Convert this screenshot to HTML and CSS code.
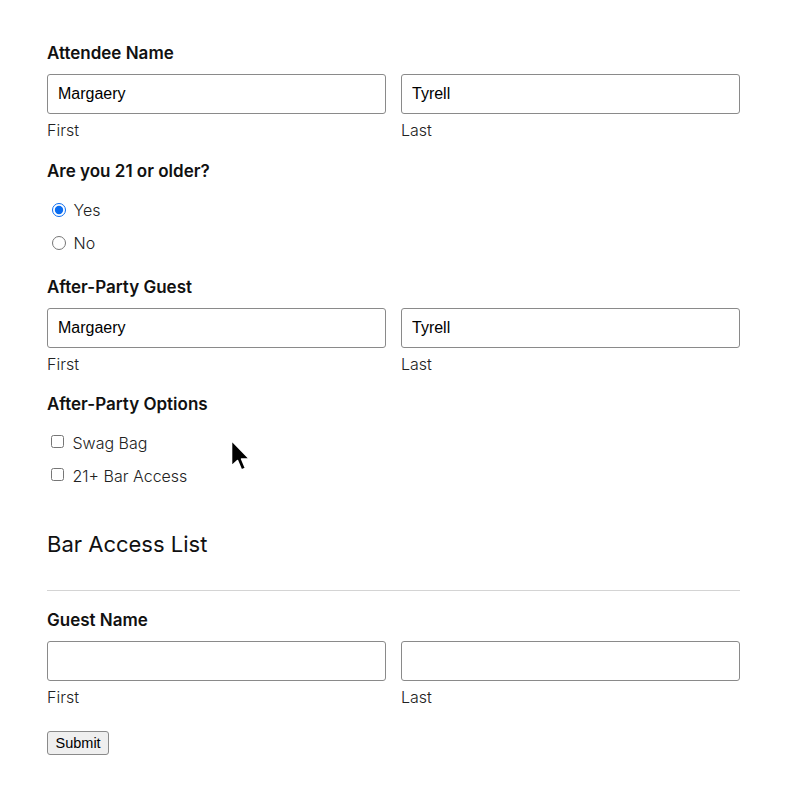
FILE: index.html
```html
<!DOCTYPE html>
<html>
<head>
<meta charset="utf-8">
<link rel="stylesheet" href="styles.css">
</head>
<body>
<form class="form">
  <div class="group">
    <div class="label">Attendee Name</div>
    <div class="name-row">
      <div class="col"><input class="text" type="text" value="Margaery"><span class="sub">First</span></div>
      <div class="col"><input class="text" type="text" value="Tyrell"><span class="sub">Last</span></div>
    </div>
  </div>
  <div class="group choice-group">
    <div class="label">Are you 21 or older?</div>
    <div class="choices">
      <label class="choice"><input type="radio" name="age" checked> Yes</label>
      <label class="choice"><input type="radio" name="age"> No</label>
    </div>
  </div>
  <div class="group group-tight">
    <div class="label">After-Party Guest</div>
    <div class="name-row">
      <div class="col"><input class="text" type="text" value="Margaery"><span class="sub">First</span></div>
      <div class="col"><input class="text" type="text" value="Tyrell"><span class="sub">Last</span></div>
    </div>
  </div>
  <div class="group choice-group">
    <div class="label">After-Party Options</div>
    <div class="choices">
      <label class="choice check"><input type="checkbox"> Swag Bag</label>
      <label class="choice check"><input type="checkbox"> 21+ Bar Access</label>
    </div>
  </div>
  <h2 class="section-title">Bar Access List</h2>
  <hr class="rule">
  <div class="group">
    <div class="label">Guest Name</div>
    <div class="name-row">
      <div class="col"><input class="text" type="text"><span class="sub">First</span></div>
      <div class="col"><input class="text" type="text"><span class="sub">Last</span></div>
    </div>
  </div>
  <div class="actions"><button class="submit" type="button">Submit</button></div>
</form>
<svg class="cursor" width="22" height="38" viewBox="0 0 22 38">
  <path d="M1.5 1.5 L1.5 27 L7.5 21.5 L11.5 31 L15.5 29.3 L11.6 20 L19.5 20 Z" fill="#000" stroke="#fff" stroke-width="1.6" stroke-linejoin="round"/>
</svg>
</body>
</html>
```

FILE: styles.css
```css
html, body {
  margin: 0;
  padding: 0;
  background: #fff;
}
body {
  font-family: Inter, "Noto Sans", sans-serif;
  color: #111;
  position: relative;
}
.form {
  width: 693px;
  margin-left: 47px;
  padding-top: 41px;
  display: flex;
  flex-direction: column;
}
.group {
  display: flex;
  flex-direction: column;
  margin-bottom: 17px;
}
.group-tight {
  margin-bottom: 16px;
}
.label {
  font-size: 17px;
  font-weight: 600;
  line-height: 24px;
  color: #111;
  margin-bottom: 9px;
}
.name-row {
  display: grid;
  grid-template-columns: 1fr 1fr;
  column-gap: 15px;
}
.col {
  display: flex;
  flex-direction: column;
}
.text {
  box-sizing: border-box;
  height: 40px;
  width: 100%;
  margin: 0;
  border: 1px solid #8a8a8a;
  border-radius: 3px;
  padding: 0 10px;
  font-family: "Liberation Sans", Arial, sans-serif;
  font-size: 16px;
  color: #000;
  background: #fff;
}
.sub {
  margin-top: 4px;
  font-size: 16px;
  line-height: 24px;
  font-weight: 300;
  color: #222;
}
.choice-group .label {
  margin-bottom: 10px;
}
.choice-group {
  margin-bottom: 16px;
}
.choices {
  display: flex;
  flex-direction: column;
}
.choice {
  height: 33px;
  display: flex;
  align-items: center;
  font-size: 16px;
  font-weight: 300;
  color: #222;
  white-space: pre;
}
.choice input[type="radio"] {
  margin: 0 3px 0 5px;
  width: 14px;
  height: 14px;
  accent-color: #0a6cf0;
}
.choice input[type="checkbox"] {
  margin: 0 4px 0 4px;
  width: 13px;
  height: 13px;
  position: relative;
  top: -1px;
}
.section-title {
  margin: 20px 0 0 0;
  font-size: 22px;
  font-weight: 400;
  line-height: 32px;
  color: #111;
}
.rule {
  margin: 30px 0 17px 0;
  border: 0;
  border-top: 1px solid #d4d4d4;
  height: 0;
}
.actions {
  margin-top: 5px;
}
.submit {
  font-family: "Liberation Sans", Arial, sans-serif;
  font-size: 14.5px;
  height: 24px;
  padding: 0 7.5px;
  border: 1px solid #8a8a8a;
  border-radius: 3px;
  background: #efefef;
  color: #000;
  line-height: 22px;
}
.cursor {
  position: absolute;
  left: 230px;
  top: 439px;
}
```
